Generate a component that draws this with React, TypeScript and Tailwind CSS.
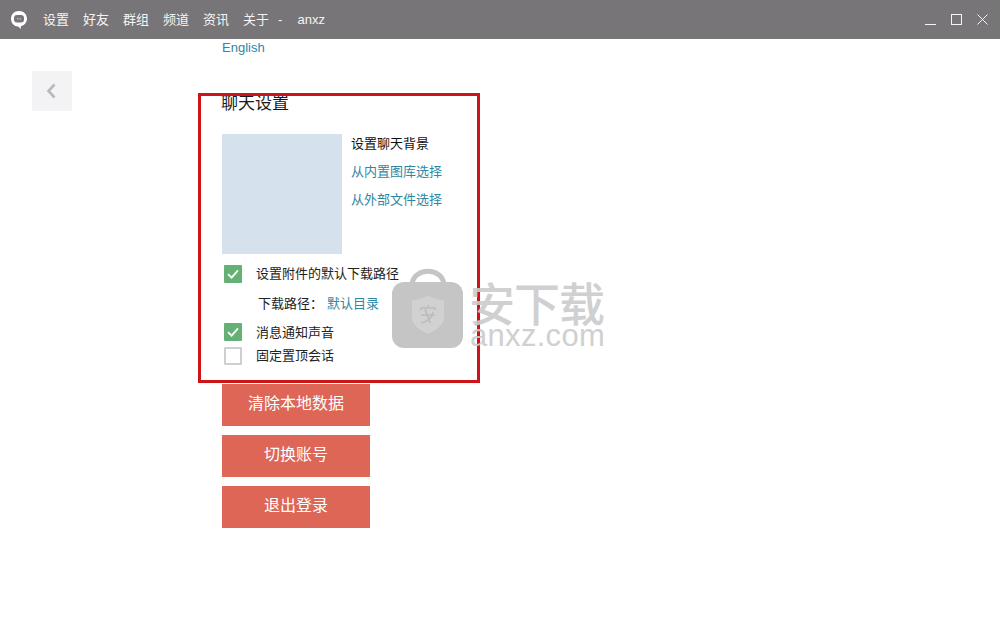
import React from 'react';

const cjk = "font-['Liberation_Sans','Noto_Sans_CJK_SC',sans-serif]";

const Check = ({ on }: { on: boolean }) => (
  <span className={`w-[18px] h-[18px] flex items-center justify-center rounded-[1px] ${on ? 'bg-[#65b074]' : 'bg-white border-2 border-[#cfcfd2]'}`}>
    {on && (
      <svg width="14" height="12" viewBox="0 0 14 12" fill="none" stroke="#fff" strokeWidth="1.8">
        <path d="M2 6.2 L5.6 9.6 L12 2.4" />
      </svg>
    )}
  </span>
);

const App: React.FC = () => {
  const menus = ['设置', '好友', '群组', '频道', '资讯', '关于'];

  return (
    <div className={`relative w-[1000px] h-[620px] bg-white overflow-hidden ${cjk}`}>
      <header className="h-[39px] bg-[#777577] flex items-center text-[#f4f4f4] text-[13px]">
        <svg className="ml-[10px] mr-[15px]" width="18" height="20" viewBox="0 0 18 20">
          <path d="M9 1C4.3 1 1 4.3 1 8.8c0 4.4 3.2 7.7 7.2 7.8l2.6 2.4v-2.7c3.6-.8 6.2-3.8 6.2-7.5C17 4.3 13.7 1 9 1z" fill="#fff" />
          <rect x="4" y="5" width="10" height="7.5" rx="3" fill="#777577" />
          <path d="M7 8.8h.9M8.6 8.8h.9M10.2 8.8h.9" stroke="#fff" strokeWidth="0.8" />
        </svg>
        <nav className="flex gap-[14px]">
          {menus.map((m) => (
            <span key={m}>{m}</span>
          ))}
        </nav>
        <span className="ml-[9px]">-</span>
        <span className="ml-[15px]">anxz</span>
        <div className="ml-auto flex items-center gap-[15px] mr-[12px]">
          <span className="w-[11px] h-[1px] bg-[#f4f4f4] mt-[10px]" />
          <span className="w-[11px] h-[11px] border border-[#f4f4f4]" />
          <svg width="11" height="11" viewBox="0 0 11 11" stroke="#f4f4f4" strokeWidth="1">
            <path d="M0.5 0.5 L10.5 10.5 M10.5 0.5 L0.5 10.5" />
          </svg>
        </div>
      </header>

      <div className="flex">
        <div className="w-[222px] pl-[32px] pt-[32px]">
          <button className="w-[40px] h-[40px] bg-[#f3f3f5] flex items-center justify-center">
            <svg className="-ml-[2px]" width="12" height="18" viewBox="0 0 12 18" fill="none" stroke="#b9b9bd" strokeWidth="2.6">
              <path d="M9.5 2.5 L3.5 9 L9.5 15.5" />
            </svg>
          </button>
        </div>

        <main className="flex-1">
          <a className="block mt-[1px] text-[13px] leading-[15px] text-[#2e87a3]">English</a>

          <h2 className="mt-[40px] -ml-[1px] text-[17px] leading-[18px] text-[#1a1a1a]">聊天设置</h2>

          <section className="mt-[21px] flex gap-[9px]">
            <div className="w-[120px] h-[120px] bg-[#d5e2ed]" />
            <div className="text-[13px] leading-[16px]">
              <p className="mt-[2px] text-[#111]">设置聊天背景</p>
              <p className="mt-[12px] text-[#2e87a3]">从内置图库选择</p>
              <p className="mt-[12px] text-[#2e87a3]">从外部文件选择</p>
            </div>
          </section>

          <div className="mt-[10px] ml-[2px] flex items-center gap-[14px] text-[13px] text-[#222]">
            <Check on />
            <span>设置附件的默认下载路径</span>
          </div>
          <div className="mt-[12px] ml-[36px] flex gap-[4px] text-[13px] leading-[16px]">
            <span className="text-[#222]">下载路径：</span>
            <span className="text-[#2e87a3]">默认目录</span>
          </div>
          <div className="mt-[11px] ml-[2px] flex items-center gap-[14px] text-[13px] text-[#222]">
            <Check on />
            <span>消息通知声音</span>
          </div>
          <div className="mt-[4px] ml-[2px] flex items-center gap-[14px] text-[13px] text-[#222]">
            <Check on={false} />
            <span>固定置顶会话</span>
          </div>

          <div className="mt-[18px] flex flex-col gap-[9px]">
            {['清除本地数据', '切换账号', '退出登录'].map((label) => (
              <button key={label} className="w-[148px] h-[42px] pb-[2px] bg-[#dd6656] text-white text-[16px]">
                {label}
              </button>
            ))}
          </div>
        </main>
      </div>

      {/* annotation box */}
      <div className="absolute left-[198px] top-[93px] w-[282px] h-[290px] border-[3px] border-[#cf1418]" />

      {/* watermark */}
      <div className="absolute left-[392px] top-[268px] flex items-start pointer-events-none opacity-90">
        <svg width="72" height="80" viewBox="0 0 72 80">
          <path d="M20 16 C22 -1 50 -1 52 16" fill="none" stroke="#bfbfbf" strokeWidth="5" />
          <rect x="0" y="14" width="71" height="66" rx="12" fill="#bfbfbf" />
          <path d="M20 33 L36 28 L52 33 V50 C52 58 42 63 36 66 C30 63 20 58 20 50 Z" fill="#cdcdcd" />
          <path d="M29 47 H43 M33 41 L38 55 M41 44 C40 50 35 54 29 55 M36 37 V40 M29 42 V40 H43 V42" fill="none" stroke="#b5b5b5" strokeWidth="1.6" />
        </svg>
        <div className="ml-[5px] mt-[11px] flex flex-col items-start text-[#cbcbcb]">
          <span className="text-[46px] leading-[44px] font-medium tracking-[-1px] font-['Noto_Sans_CJK_SC',sans-serif]">安下载</span>
          <span className="ml-[1px] text-[31px] leading-[26px] tracking-[0.3px]">anxz.com</span>
        </div>
      </div>
    </div>
  );
};

export default App;
